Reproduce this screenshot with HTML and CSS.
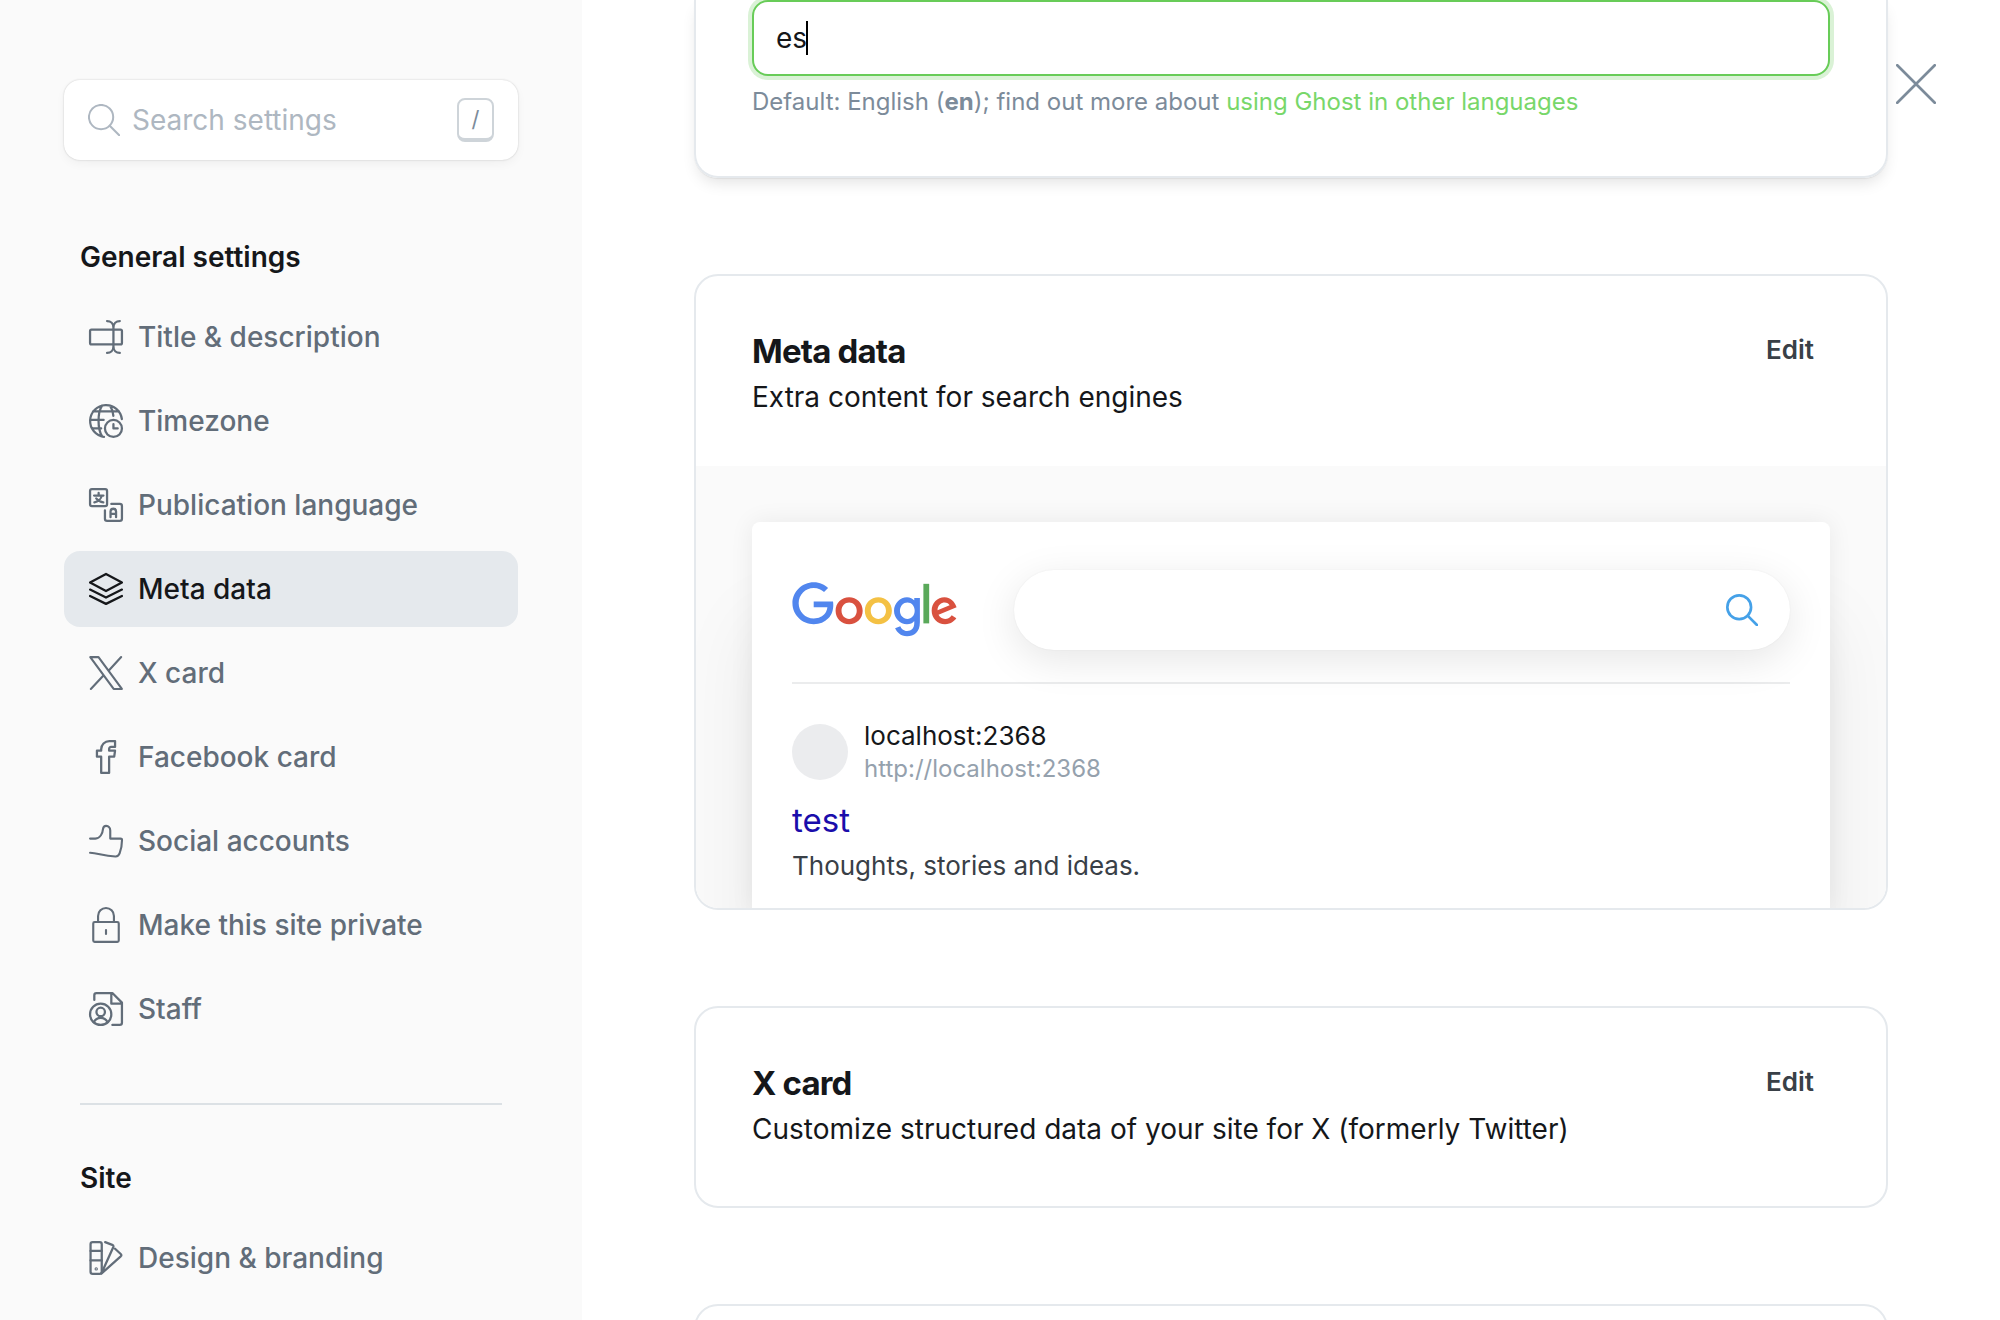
FILE: index.html
```html
<!DOCTYPE html>
<html lang="en">
<head>
<meta charset="utf-8">
<meta name="viewport" content="width=device-width, initial-scale=1">
<title>Settings</title>
<link rel="stylesheet" href="styles.css">
</head>
<body>
<div class="app">
  <aside class="sidebar">
    <div class="search">
      <svg class="search-icon" viewBox="0 0 24 24" aria-hidden="true"><circle cx="9.8" cy="9.8" r="9.1"/><path d="M16.3 16.3l7.1 7.1"/></svg>
      <input class="search-input" type="text" placeholder="Search settings" aria-label="Search settings">
      <kbd class="search-key">/</kbd>
    </div>

    <nav class="nav" aria-label="Settings">
      <h2 class="nav-heading">General settings</h2>
      <ul class="nav-list">
        <li><a class="nav-item" href="#title">
          <svg class="icon" viewBox="0 0 24 24" aria-hidden="true"><rect x=".75" y="6.75" width="22.5" height="10.5" rx="1"/><path d="M12.75.75c2.6 0 4.5 1.9 4.5 4.5v13.5c0 2.6-1.9 4.5-4.5 4.5M21.75.75c-2.6 0-4.5 1.9-4.5 4.5M21.75 23.25c-2.6 0-4.5-1.9-4.5-4.5"/></svg>
          Title &amp; description</a></li>
        <li><a class="nav-item" href="#timezone">
          <svg class="icon" viewBox="0 0 24 24" aria-hidden="true"><path d="M23.2 10.6A11.25 11.25 0 1 0 10.6 23.2M2.8 5.25h18.4M.75 11.25h9.6M2.6 17.25h6M9.2 1.1C7.4 3.9 6.7 8 6.75 12c0 4 .9 8.3 2.5 10.9M14.8 1.1c1.4 2 2.2 4.6 2.4 7.3"/><circle cx="17.25" cy="17.25" r="6"/><path d="M17.25 14.25v3h3"/></svg>
          Timezone</a></li>
        <li><a class="nav-item" href="#language">
          <svg class="icon" viewBox="0 0 24 24" aria-hidden="true"><rect x=".75" y=".75" width="12" height="12" rx="1.3"/><path d="M15.75 11.25h6a1.5 1.5 0 0 1 1.5 1.5v9a1.5 1.5 0 0 1-1.5 1.5h-9a1.5 1.5 0 0 1-1.5-1.5v-6M15.2 20.6v-4a1.95 1.95 0 0 1 3.9 0v4M15.2 18.3h3.9M3.6 5.3h6.600M6.8 3.5v1.8M9 5.4c-.4 2.2-2.6 4.3-5.2 4.7M5.1 7.3c1.2 1.6 2.9 2.6 5 2.8"/></svg>
          Publication language</a></li>
        <li><a class="nav-item nav-item-active" href="#metadata" aria-current="true">
          <svg class="icon" viewBox="0 0 24 24" aria-hidden="true"><path d="M12 1.4L23.25 7.4 12 13.4.75 7.4zM.75 12.4L12 18l11.25-5.6M.75 16.9L12 22.5l11.25-5.6"/></svg>
          Meta data</a></li>
        <li><a class="nav-item" href="#x-card">
          <svg class="icon icon-thin" viewBox="0 0 24 24" aria-hidden="true"><path d="M.9.75h5.8l16.5 22.5h-5.8zM22.7.75L14 10.2M1.3 23.25l8.9-9.5"/></svg>
          X card</a></li>
        <li><a class="nav-item" href="#facebook-card">
          <svg class="icon" viewBox="0 0 24 24" aria-hidden="true"><path d="M8.6 23.25v-11.5h-3V7.5h3v-1A5.7 5.7 0 0 1 14.3.75h4.1v4.15h-2.8a1.4 1.4 0 0 0-1.4 1.4v1.2h4.2l-.6 4.25h-3.6v11.5z"/></svg>
          Facebook card</a></li>
        <li><a class="nav-item" href="#social">
          <svg class="icon icon-thin" viewBox="0 0 24 24" aria-hidden="true"><path d="M.75 10.3H4.5C8 10.1 9.6 6.5 9.9 3.4 10.1 1.9 10.9 1.3 12.1 1.3 13.8 1.3 15 2.7 15 4.6v5.7h7.2c.7 0 1.1.4 1.1 1 0 3.3-.6 6.5-1.7 9.5-.6 1.6-1.4 2.2-3 2.1C10 22.6 6.5 20.6.75 20.3"/></svg>
          Social accounts</a></li>
        <li><a class="nav-item" href="#private">
          <svg class="icon icon-thin" viewBox="0 0 24 24" aria-hidden="true"><rect x="3" y="9.9" width="18" height="14" rx="1"/><path d="M6.4 9.9V5.6a5.6 5.6 0 0 1 11.2 0v4.3M12 15.5v2.8"/></svg>
          Make this site private</a></li>
        <li><a class="nav-item" href="#staff">
          <svg class="icon" viewBox="0 0 24 24" aria-hidden="true"><circle cx="8.25" cy="15.75" r="7.5"/><circle cx="8.25" cy="14.1" r="3"/><path d="M3.4 21.3c1-2 2.8-3.1 4.85-3.1s3.85 1.1 4.85 3.1M3.75 5.6V2.25a1.5 1.5 0 0 1 1.5-1.5H16.5l6.75 6.75v14.25a1.5 1.5 0 0 1-1.5 1.5H16.5M15.75.75V8.25h7.5"/></svg>
          Staff</a></li>
      </ul>
      <hr class="nav-divider">
      <h2 class="nav-heading">Site</h2>
      <ul class="nav-list">
        <li><a class="nav-item" href="#design">
          <svg class="icon" viewBox="0 0 24 24" aria-hidden="true"><rect x="1.1" y=".75" width="7.9" height="22.5" rx="1.5"/><path d="M1.1 7H9M1.1 13.7H9M11.4.8l5 1.9q1.200.5.7 1.700L8.9 22.6M18.4 5.5l4 3.7q.8.8 0 1.6L8.9 22.9"/><circle cx="5.100" cy="19.7" r=".4"/></svg>
          Design &amp; branding</a></li>
      </ul>
    </nav>
  </aside>

  <main class="main">
    <section class="card card-editing">
      <div class="field">
        <input class="field-input" type="text" value="es" aria-label="Site language" aria-describedby="language-hint">
        <span class="caret" aria-hidden="true"></span>
      </div>
      <p class="hint" id="language-hint">Default: English (<strong>en</strong>); find out more about <a class="hint-link" href="#languages">using Ghost in other languages</a></p>
    </section>

    <section class="card">
      <header class="card-header card-header-preview">
        <div class="card-text">
          <h3 class="card-title">Meta data</h3>
          <p class="card-desc">Extra content for search engines</p>
        </div>
        <button class="edit" type="button">Edit</button>
      </header>
      <div class="preview">
        <div class="serp">
          <div class="serp-top">
            <svg class="google" viewBox="0 0 272 92" role="img" aria-label="Google">
              <path fill="#d9513f" d="M115.75 47.18c0 12.77-9.99 22.18-22.25 22.18s-22.25-9.41-22.25-22.18C71.25 34.32 81.24 25 93.5 25s22.25 9.32 22.25 22.18zm-9.74 0c0-7.98-5.79-13.44-12.51-13.44S80.99 39.2 80.99 47.18c0 7.9 5.79 13.44 12.51 13.44s12.51-5.55 12.51-13.44z"/>
              <path fill="#f4c144" d="M163.75 47.18c0 12.77-9.99 22.18-22.25 22.18s-22.25-9.41-22.25-22.18c0-12.85 9.99-22.18 22.25-22.18s22.25 9.32 22.25 22.18zm-9.74 0c0-7.98-5.79-13.44-12.51-13.44s-12.51 5.46-12.51 13.44c0 7.9 5.79 13.44 12.51 13.44s12.51-5.55 12.51-13.44z"/>
              <path fill="#5186ee" d="M209.75 26.34v39.82c0 16.38-9.66 23.07-21.08 23.07-10.75 0-17.22-7.19-19.66-13.07l8.48-3.53c1.51 3.61 5.21 7.87 11.17 7.87 7.31 0 11.84-4.51 11.84-13v-3.19h-.34c-2.18 2.69-6.38 5.04-11.68 5.04-11.09 0-21.25-9.66-21.25-22.09 0-12.52 10.16-22.26 21.25-22.26 5.29 0 9.49 2.35 11.68 4.96h.34v-3.61h9.25zm-8.56 20.92c0-7.81-5.21-13.52-11.84-13.52-6.72 0-12.35 5.71-12.35 13.52 0 7.73 5.63 13.36 12.35 13.36 6.63 0 11.84-5.63 11.84-13.36z"/>
              <path fill="#5aa95a" d="M225 3v65h-9.5V3h9.5z"/>
              <path fill="#d9513f" d="M262.02 54.48l7.56 5.04c-2.44 3.61-8.32 9.83-18.48 9.83-12.6 0-22.01-9.74-22.01-22.18 0-13.19 9.49-22.18 20.92-22.18 11.51 0 17.14 9.16 18.98 14.11l1.01 2.52-29.65 12.28c2.27 4.45 5.8 6.72 10.75 6.72 4.96 0 8.4-2.44 10.92-6.14zm-23.27-7.98l19.82-8.23c-1.09-2.77-4.37-4.7-8.23-4.7-4.95 0-11.84 4.37-11.59 12.93z"/>
              <path fill="#5186ee" d="M35.29 41.41V32H67c.31 1.64.47 3.58.47 5.68 0 7.06-1.93 15.79-8.15 22.01-6.05 6.3-13.78 9.66-24.02 9.66C16.32 69.35.36 53.89.36 34.91.36 15.93 16.32.47 35.3.47c10.5 0 17.98 4.12 23.6 9.49l-6.64 6.64c-4.03-3.78-9.49-6.72-16.97-6.72-13.86 0-24.7 11.17-24.7 25.03 0 13.86 10.84 25.03 24.7 25.03 8.99 0 14.11-3.61 17.39-6.89 2.66-2.66 4.41-6.46 5.1-11.65l-22.49.01z"/>
            </svg>
            <div class="serp-search">
              <svg class="serp-search-icon" viewBox="0 0 24 24" aria-hidden="true"><circle cx="9.9" cy="9.9" r="8.9"/><path d="M16.2 16.2l7 7"/></svg>
            </div>
          </div>
          <div class="serp-site">
            <span class="favicon"></span>
            <div>
              <p class="site-name">localhost:2368</p>
              <p class="site-url">http://localhost:2368</p>
            </div>
          </div>
          <p class="serp-title">test</p>
          <p class="serp-desc">Thoughts, stories and ideas.</p>
        </div>
      </div>
    </section>

    <section class="card">
      <header class="card-header">
        <div class="card-text">
          <h3 class="card-title">X card</h3>
          <p class="card-desc">Customize structured data of your site for X (formerly Twitter)</p>
        </div>
        <button class="edit" type="button">Edit</button>
      </header>
    </section>

    <section class="card card-next"></section>
  </main>

  <button class="close" type="button" aria-label="Close settings">
    <svg class="close-icon" viewBox="0 0 24 24" aria-hidden="true"><path d="M.75.75l22.5 22.5M23.25.75L.75 23.25"/></svg>
  </button>
</div>
</body>
</html>
```

FILE: styles.css
```css
* {
  box-sizing: border-box;
}

body,
h2,
h3,
p,
ul {
  margin: 0;
  padding: 0;
}

body {
  background: #fff;
  color: #15171a;
  font-family: Inter, "Liberation Sans", sans-serif;
  font-size: 28px;
  font-optical-sizing: none;
  overflow: hidden;
}

input,
button,
kbd {
  font: inherit;
}

svg {
  display: block;
  flex: none;
  fill: none;
  stroke-linecap: round;
  stroke-linejoin: round;
}

.app {
  display: flex;
  height: 100vh;
  overflow: hidden;
}

/* Sidebar */

.sidebar {
  flex: none;
  width: 582px;
  padding: 80px 64px 0;
  background: #fafafa;
}

.search {
  display: flex;
  align-items: center;
  gap: 12px;
  height: 80px;
  padding: 0 24px;
  border-radius: 16px;
  background: #fff;
  box-shadow: 0 0 2px rgba(0, 0, 0, 0.2), 0 4px 12px -2px rgba(0, 0, 0, 0.06);
}

.search-icon {
  width: 32px;
  height: 32px;
  stroke: #aeb7c1;
  stroke-width: 1.5;
}

.search-input {
  flex: 1;
  min-width: 0;
  padding: 0;
  border: 0;
  outline: 0;
  background: none;
  color: #15171a;
}

.search-input::placeholder {
  color: #aeb7c1;
  opacity: 1;
}

.search-key {
  width: 37px;
  height: 44px;
  border: 2px solid #ced4d9;
  border-bottom-width: 4px;
  border-radius: 8px;
  color: #7c8b9a;
  font-size: 22px;
  line-height: 38px;
  text-align: center;
}

.nav {
  margin-top: 80px;
}

.nav-heading {
  padding: 0 16px;
  margin-bottom: 25px;
  font-size: 28px;
  font-weight: 600;
  line-height: 34px;
}

.nav-list {
  display: flex;
  flex-direction: column;
  gap: 8px;
  list-style: none;
}

.nav-item {
  display: flex;
  align-items: center;
  gap: 15px;
  height: 76px;
  padding: 0 25px;
  border-radius: 16px;
  color: #626d79;
  font-weight: 500;
  text-decoration: none;
  white-space: nowrap;
}

.nav-item-active {
  background: #e5e9ed;
  color: #15171a;
}

.icon {
  width: 34px;
  height: 34px;
  overflow: visible;
  stroke: currentColor;
  stroke-width: 1.6;
}

.icon-thin {
  stroke-width: 1.5;
}

.nav-divider {
  height: 2px;
  margin: 56px 16px;
  border: 0;
  background: #dce1e5;
}

/* Content */

.main {
  display: flex;
  flex: 1;
  flex-direction: column;
  gap: 96px;
  min-width: 0;
  padding: 0 112px;
}

.card {
  flex: none;
  border: 2px solid #e5e9ed;
  border-radius: 24px;
  overflow: hidden;
}

.card-editing {
  padding: 0 56px 56px;
  border-top: 0;
  border-radius: 0 0 24px 24px;
  overflow: visible;
  box-shadow: 0 1px 1px rgba(0, 0, 0, 0.06), 0 8px 16px -4px rgba(0, 0, 0, 0.12);
}

.card-header {
  display: flex;
  align-items: flex-start;
  justify-content: space-between;
  padding: 56px;
}

.card-header-preview {
  padding-bottom: 48px;
}

.card-text {
  display: flex;
  flex-direction: column;
  gap: 6px;
}

.card-title {
  font-size: 33px;
  font-weight: 700;
  letter-spacing: -0.025em;
  line-height: 38px;
}

.card-desc {
  line-height: 42px;
}

.card-next {
  height: 200px;
}

.edit {
  padding: 0 16px;
  border: 0;
  background: none;
  color: #394047;
  font-size: 26px;
  font-weight: 600;
  line-height: 36px;
}

.field {
  position: relative;
}

.field-input {
  display: block;
  width: 100%;
  height: 76px;
  padding: 0 22px;
  border: 2px solid #68cc58;
  border-radius: 16px;
  outline: 0;
  background: #fff;
  color: #15171a;
  box-shadow: 0 0 0 4px #daf2d6;
}

.caret {
  position: absolute;
  top: 21px;
  left: 54px;
  width: 2px;
  height: 34px;
  background: #000;
}

.hint {
  margin-top: 8px;
  color: #7c8b9a;
  font-size: 24px;
  line-height: 36px;
}

.hint-link {
  color: #78d76a;
  text-decoration: none;
}

/* Search result preview */

.preview {
  padding: 56px 56px 0;
  background: #fafafa;
}

.serp {
  padding: 48px 40px 22px;
  border-radius: 8px 8px 0 0;
  background: #fff;
  box-shadow: 0 0 24px rgba(0, 0, 0, 0.07), 0 100px 80px rgba(0, 0, 0, 0.07);
}

.serp-top {
  display: flex;
  align-items: center;
  gap: 56px;
  padding-bottom: 32px;
  border-bottom: 2px solid #ebeced;
}

.google {
  width: 166px;
  height: 56px;
}

.serp-search {
  display: flex;
  flex: 1;
  align-items: center;
  justify-content: flex-end;
  height: 80px;
  padding: 0 32px;
  border-radius: 40px;
  background: #fff;
  box-shadow: 0 0 2px rgba(0, 0, 0, 0.06), 0 10px 40px rgba(0, 0, 0, 0.1);
}

.serp-search-icon {
  width: 32px;
  height: 32px;
  stroke: #45a1e8;
  stroke-width: 2;
}

.serp-site {
  display: flex;
  align-items: center;
  gap: 16px;
  margin-top: 35px;
}

.favicon {
  width: 56px;
  height: 56px;
  border-radius: 50%;
  background: #ebecee;
}

.site-name {
  font-size: 26px;
  line-height: 34px;
}

.site-url {
  color: #95a1ad;
  font-size: 24px;
  line-height: 32px;
}

.serp-title {
  margin-top: 14px;
  color: #1a0dab;
  font-size: 33px;
  line-height: 42px;
}

.serp-desc {
  margin-top: 5px;
  color: #394047;
  font-size: 26px;
  line-height: 40px;
}

/* Close button over the content */

.close {
  position: fixed;
  top: 64px;
  right: 64px;
  padding: 0;
  border: 0;
  background: none;
}

.close-icon {
  width: 40px;
  height: 40px;
  stroke: #7c8b9a;
  stroke-width: 1.6;
}
```
